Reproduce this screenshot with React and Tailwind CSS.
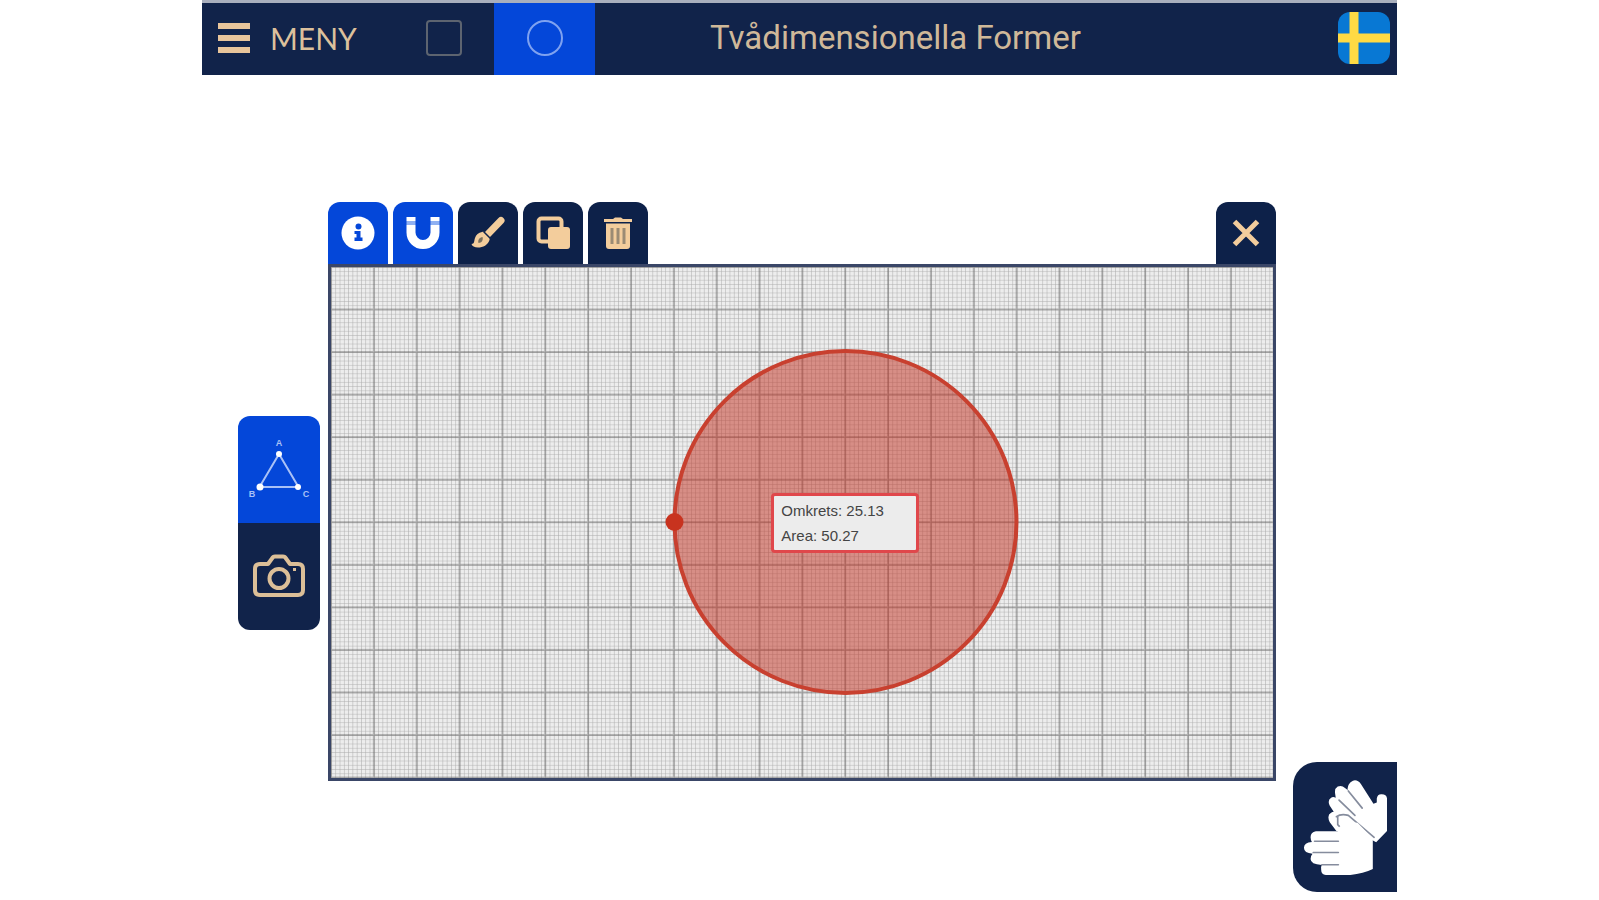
import React, { useState } from 'react';

const SAND = '#f3cd9c';

function InfoIcon() {
  return (
    <svg viewBox="0 0 34 34" className="w-[34px] h-[34px]" aria-hidden="true">
      <circle cx="17" cy="17" r="16.5" fill="#fff" />
      <circle cx="17.5" cy="10.5" r="3" fill="#0447d9" />
      <path d="M13.5 15h6v6.5h2V25h-8v-3.500h2V18h-2z" fill="#0447d9" />
    </svg>
  );
}

function MagnetIcon() {
  return (
    <svg viewBox="0 0 34 34" className="w-[34px] h-[34px]" aria-hidden="true">
      <path d="M5 9v7.500a12 12 0 0 0 24 0V9" fill="none" stroke="#fff" strokeWidth="9" />
      <path d="M0.500 1h9v4h-9zM24.500 1h9v4h-9z" fill="#fff" />
      <path d="M0.500 7h9M24.500 7h9" stroke="#8fb0f2" strokeWidth="4" />
    </svg>
  );
}

function BrushIcon() {
  return (
    <svg viewBox="0 0 34 34" className="w-[34px] h-[34px]" aria-hidden="true">
      <path d="M30 4.500 17 18" stroke={SAND} strokeWidth="7" strokeLinecap="round" />
      <path d="M11 16c5-1 9 3 7.500 8-1.500 5-6.500 7.500-11.500 7.500C3.500 31.500 1 30 0.500 28c3 0 2.500-3 3.500-6 1-3.500 3.500-5.500 7-6z" fill={SAND} />
      <path d="m12.500 15.500 7 7" stroke="#11234a" strokeWidth="1.500" />
      <path d="M7.500 27c-1-3 1-5.500 4-6 1 3-1 6-4 6z" fill="#7a705f" />
    </svg>
  );
}

function CloneIcon() {
  return (
    <svg viewBox="0 0 34 34" className="w-[34px] h-[34px]" aria-hidden="true">
      <rect x="2.500" y="2.500" width="23" height="23" rx="3" fill="none" stroke={SAND} strokeWidth="4" />
      <rect x="12" y="11" width="22" height="22" rx="3" fill={SAND} />
    </svg>
  );
}

function TrashIcon() {
  return (
    <svg viewBox="0 0 34 34" className="w-[34px] h-[34px]" aria-hidden="true">
      <path d="M3 3h9l2-1.500h6L22 3h9v3H3z" fill={SAND} />
      <path d="M5 7.500h24V30a3 3 0 0 1-3 3H8a3 3 0 0 1-3-3z" fill={SAND} />
      <path d="M11 12v16M17 12v16M23 12v16" stroke="#9b8b74" strokeWidth="3" />
    </svg>
  );
}

function CloseIcon() {
  return (
    <svg viewBox="0 0 28 28" className="w-7 h-7" aria-hidden="true">
      <path d="M2.500 2.500 25.500 25.500M25.500 2.500 2.500 25.500" stroke={SAND} strokeWidth="5" />
    </svg>
  );
}

function TriangleIcon() {
  return (
    <svg viewBox="0 0 64 64" className="w-16 h-16" aria-hidden="true">
      <path d="M32 17 12.500 50h39z" fill="none" stroke="#a9c1f6" strokeWidth="2" />
      <g fill="#fff">
        <circle cx="32" cy="17" r="3" />
        <circle cx="13" cy="50" r="3.500" />
        <circle cx="51" cy="50" r="3" />
      </g>
      <g fill="#a9c1f6" fontFamily="Liberation Sans, sans-serif" fontSize="9" fontWeight="700" textAnchor="middle">
        <text x="32" y="9">A</text>
        <text x="5" y="60">B</text>
        <text x="59" y="60">C</text>
      </g>
    </svg>
  );
}

function CameraIcon() {
  return (
    <svg viewBox="0 0 52 44" className="w-[52px] h-11" fill="none" stroke="#dcbf98" strokeWidth="4" aria-hidden="true">
      <path d="M7 10h8l4-5.500q1-2 3-2h8q2 0 3 2L37 10h8q5 0 5 5v21q0 5-5 5H7q-5 0-5-5V15q0-5 5-5z" strokeLinejoin="round" />
      <circle cx="26" cy="24.500" r="9.500" />
      <path d="M40 15.500h3" strokeWidth="3" />
    </svg>
  );
}

function FlagIcon() {
  return (
    <svg viewBox="0 0 52 52" className="w-[52px] h-[52px] rounded-xl" aria-hidden="true">
      <path d="M0 0h52v52H0z" fill="#0878d4" />
      <path d="M16 0v52M0 26h52" stroke="#ffda44" strokeWidth="9" />
    </svg>
  );
}

function HandsIcon() {
  return (
    <svg viewBox="0 0 252 290" className="w-[84px] h-24" strokeLinecap="round" strokeLinejoin="round" aria-hidden="true">
      {/* back hand */}
      <path
        d="M150 5q14-4 24 10l38 60 10-4v-12q2-14 15-13 15 0 16 13v98l-33 34-50-28-70-6-20-26q-10-22 4-29 4-3 8-3l-12-18q-8-16 4-24 6-5 14 0l-2-14q-2-14 8-20 12-5 22 4l8 6q-2-18 16-28z"
        fill="#fff"
      />
      <path d="M136 36 178 88M108 64l48 46M100 114q14-10 36-4l78 66M104 114v24l14 14" fill="none" stroke="#858c9d" strokeWidth="5" />
      {/* front hand */}
      <path
        d="M104 150 124 130l40 2 46 48v92q-28 14-68 18H68q-14-2-14-16-2-8 2-14-34-2-34-18 0-10 6-16-26-2-26-18 0-16 24-18-4-6-4-14 0-15 16-18h66z"
        fill="#fff"
      />
      <path d="M34 188h72M30 222h76M56 259h50" fill="none" stroke="#858c9d" strokeWidth="5" />
    </svg>
  );
}

// Millimetre paper with the circle drawn on top
function Canvas() {
  return (
    <svg viewBox="0 0 942 511" className="block w-full h-auto" role="img" aria-label="Cirkel">
      <defs>
        <pattern id="minor" width="4.285" height="4.255" patternUnits="userSpaceOnUse">
          <path d="M0 0V4.255M0 0H4.285" stroke="#555" strokeOpacity="0.44" strokeWidth="1" />
        </pattern>
        <pattern id="major" width="42.85" height="42.55" patternUnits="userSpaceOnUse" x="-10" y="-10">
          <path d="M10 0V42.550M0 10H42.850" stroke="#444" strokeOpacity="0.34" strokeWidth="2" />
        </pattern>
      </defs>
      <rect width="942" height="511" fill="#ededed" />
      <rect width="942" height="511" fill="url(#minor)" />
      <rect width="942" height="511" fill="url(#major)" />
      <circle cx="514.5" cy="255" r="171" fill="#c1301f" fillOpacity="0.5" stroke="#c8402f" strokeWidth="4" />
      <circle cx="343.5" cy="255" r="9" fill="#c8331f" />
    </svg>
  );
}

const tools = [
  { id: 'info', label: 'Information', Icon: InfoIcon },
  { id: 'snap', label: 'Magnet', Icon: MagnetIcon },
  { id: 'paint', label: 'Pensel', Icon: BrushIcon },
  { id: 'copy', label: 'Kopiera', Icon: CloneIcon },
  { id: 'delete', label: 'Radera', Icon: TrashIcon },
];

function ToolTab({ label, active, onClick, children }) {
  return (
    <button
      type="button"
      aria-label={label}
      onClick={onClick}
      className={`flex items-center justify-center w-[60px] h-[62px] rounded-t-xl ${active ? 'bg-[#0447d9]' : 'bg-[#0d2149]'}`}
    >
      {children}
    </button>
  );
}

function App() {
  const [shape, setShape] = useState('circle');
  const [open, setOpen] = useState(true);
  const [active, setActive] = useState({ info: true, snap: true });

  const toggle = (id) => setActive({ ...active, [id]: !active[id] });

  return (
    <div className="flex flex-col min-h-screen bg-white font-['Roboto',sans-serif]">
      <div className="flex flex-col flex-1 w-full max-w-[1195px] mx-auto">
        <header className="flex items-stretch h-[75px] pb-0.5 bg-[#11234a] border-t-3 border-[#a9afbd]">
          <button type="button" className="flex items-center gap-5 w-[191px] pl-4 text-[#dcc09c] text-[30px]">
            <span className="flex flex-col gap-1.5 w-8">
              <span className="h-1.5 bg-[#e8c59b]" />
              <span className="h-1.5 bg-[#e8c59b]" />
              <span className="h-1.5 bg-[#e8c59b]" />
            </span>
            <span className="font-['Lato',sans-serif]">MENY</span>
          </button>
          <button
            type="button"
            aria-label="Kvadrat"
            onClick={() => setShape('square')}
            className={`flex items-center justify-center w-[101px] -mb-0.5 pb-0.5 ${shape === 'square' ? 'bg-[#0447d9]' : ''}`}
          >
            <span className="w-9 h-9 border-2 border-[#5d6470] rounded-sm" />
          </button>
          <button
            type="button"
            aria-label="Cirkel"
            onClick={() => setShape('circle')}
            className={`flex items-center justify-center w-[101px] -mb-0.5 pb-0.5 ${shape === 'circle' ? 'bg-[#0447d9]' : ''}`}
          >
            <span className="w-9 h-9 border-2 border-[#7fa2f0] rounded-full" />
          </button>
          <h1 className="flex-1 self-center text-center text-[33px] text-[#cfb899]">Tvådimensionella Former</h1>
          <div className="flex items-center justify-end w-[201px] pr-[7px]">
            <button type="button" aria-label="Svenska">
              <FlagIcon />
            </button>
          </div>
        </header>

        <main className="flex flex-1 items-start gap-[17px] pt-[127px] pb-2 pl-9">
          {open && (
            <section className="flex flex-1 items-center gap-2">
              <div className="flex flex-col mt-[62px] w-[82px] rounded-xl overflow-hidden">
                <button type="button" aria-label="Triangel" className="flex items-center justify-center h-[107px] bg-[#0447d9]">
                  <TriangleIcon />
                </button>
                <button type="button" aria-label="Kamera" className="flex items-center justify-center h-[107px] bg-[#11234a]">
                  <CameraIcon />
                </button>
              </div>

              <div className="flex-1">
                <div className="flex gap-[5px]">
                  {tools.map(({ id, label, Icon }) => (
                    <ToolTab key={id} label={label} active={active[id]} onClick={() => toggle(id)}>
                      <Icon />
                    </ToolTab>
                  ))}
                  <div className="ml-auto">
                    <ToolTab label="Stäng" onClick={() => setOpen(false)}>
                      <CloseIcon />
                    </ToolTab>
                  </div>
                </div>
                <div className="relative border-3 border-[#3a4667]">
                  <Canvas />
                  <div className="absolute left-[54.6%] top-1/2 -translate-x-1/2 -translate-y-1/2 w-[148px] border-3 border-[#e0474b] rounded-sm bg-[#ececec] px-[7px] py-0.5 font-['Liberation_Sans',sans-serif] text-[15px] leading-[25px] text-[#444]">
                    <p>Omkrets: 25.13</p>
                    <p>Area: 50.27</p>
                  </div>
                </div>
              </div>
            </section>
          )}
          <button
            type="button"
            aria-label="Händer"
            className="flex items-center justify-center self-end ml-auto w-[104px] h-[130px] bg-[#11234a] rounded-l-3xl"
          >
            <HandsIcon />
          </button>
        </main>
      </div>
    </div>
  );
}

export default App;
